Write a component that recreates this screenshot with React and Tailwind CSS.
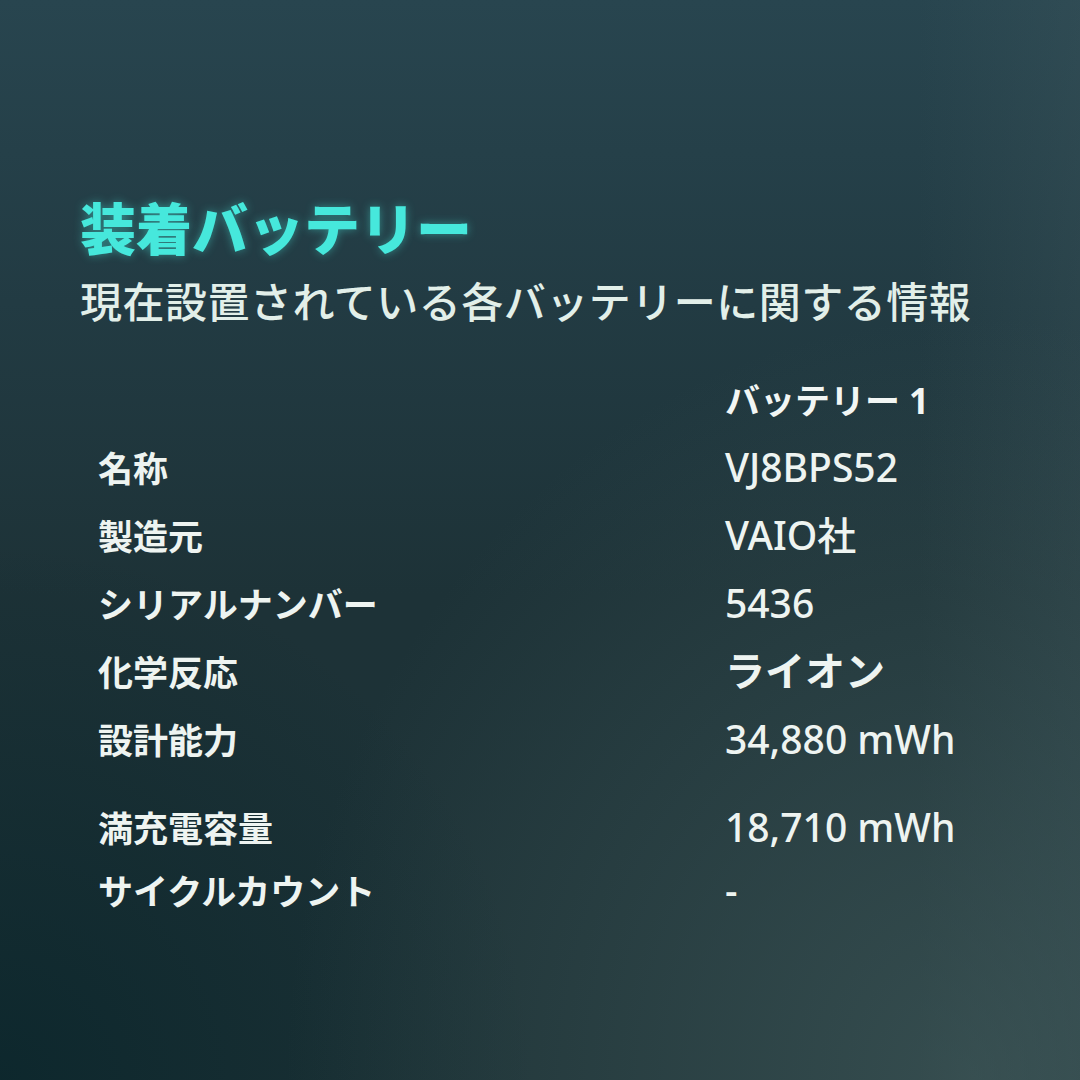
import React from "react";

const ROWS = [
  { label: "名称", value: "VJ8BPS52" },
  { label: "製造元", value: "VAIO社" },
  { label: "シリアルナンバー", value: "5436" },
  { label: "化学反応", value: "ライオン", bold: true },
  { label: "設計能力", value: "34,880 mWh" },
  { label: "満充電容量", value: "18,710 mWh", gap: true, h: "h-[64px]" },
  { label: "サイクルカウント", value: "-", h: "h-[62px]" },
];

export default function App() {
  return (
    <div
      className="w-[1080px] h-[1080px] overflow-hidden text-[#e6f0ec] [font-family:'Noto_Sans','Noto_Sans_CJK_JP',sans-serif] [background-image:radial-gradient(ellipse_at_90%_100%,rgba(78,104,104,0.5)_0%,rgba(78,104,104,0)_50%),radial-gradient(ellipse_at_0%_100%,rgba(8,36,42,0.75)_0%,rgba(8,36,42,0)_35%),linear-gradient(90deg,rgba(0,0,0,0)_85%,rgba(70,95,100,0.25)_100%),linear-gradient(180deg,#28454f_0%,#223b43_28%,#1d3237_55%,#1d3236_100%)]"
    >
      <div className="pt-[194px] pl-[80px] flex flex-col">
        <h1 className="h-[64px] leading-[64px] text-[56px] font-black text-[#46e8dc] [text-shadow:0_0_10px_rgba(70,232,220,0.45)] [font-family:'Noto_Sans_CJK_JP',sans-serif]">
          装着バッテリー
        </h1>
        <p className="mt-[14px] h-[56px] leading-[56px] text-[42px] font-medium text-[#e2efe9] [font-family:'Noto_Sans_CJK_JP',sans-serif] tracking-[0.5px]">
          現在設置されている各バッテリーに関する情報
        </p>

        <div className="mt-[41px] ml-[18px] flex flex-col">
          <div className="h-[64px] grid grid-cols-[627px_1fr] items-center">
            <span />
            <span className="text-[35px] font-bold text-[#f2f6f4] [font-family:'Noto_Sans','Noto_Sans_CJK_JP',sans-serif]">
              バッテリー 1
            </span>
          </div>
          {ROWS.map((r) => (
            <div
              key={r.label}
              className={`${r.h || "h-[68px]"} ${r.gap ? "mt-[22px]" : ""} grid grid-cols-[627px_1fr] items-center`}
            >
              <span className="text-[35px] font-semibold text-[#eef4f1] [font-family:'Noto_Sans_CJK_JP',sans-serif]">
                {r.label}
              </span>
              <span
                className={`${r.bold ? "text-[40px] font-bold" : "text-[39px] font-medium"} text-[#eef4f1] [font-family:'Noto_Sans','Noto_Sans_CJK_JP',sans-serif]`}
              >
                {r.value}
              </span>
            </div>
          ))}
        </div>
      </div>
    </div>
  );
}
